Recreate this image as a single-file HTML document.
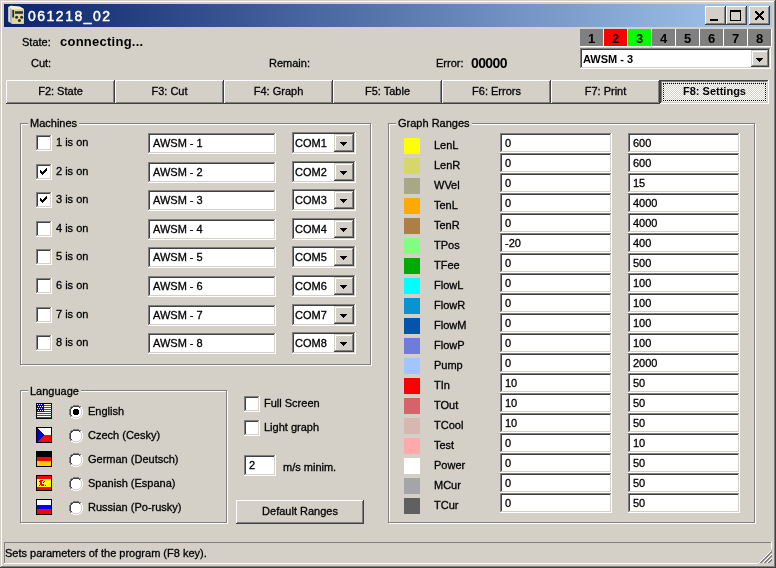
<!DOCTYPE html>
<html><head><meta charset="utf-8"><style>
html,body{margin:0;padding:0}
body{width:776px;height:568px;overflow:hidden;position:relative;background:#d4d0c8;font-family:"Liberation Sans",sans-serif;font-size:11px;color:#000}
div,svg{position:absolute;box-sizing:border-box}
.t{white-space:nowrap;line-height:13px;will-change:transform;-webkit-text-stroke:0.3px currentColor}
body{-webkit-font-smoothing:antialiased}
.rz{background:#d4d0c8;box-shadow:inset -1px -1px #404040,inset 1px 1px #fff,inset -2px -2px #808080,inset 2px 2px #d4d0c8}
.sb{background:#d4d0c8;box-shadow:inset -1px -1px #404040,inset 1px 1px #d4d0c8,inset -2px -2px #808080,inset 2px 2px #fff}
.sk{box-shadow:inset -1px -1px #fff,inset 1px 1px #808080,inset -2px -2px #d4d0c8,inset 2px 2px #404040}
</style></head><body>

<div style="left:0;top:0;width:776px;height:568px;box-shadow:inset -1px -1px #404040,inset 1px 1px #d4d0c8,inset -2px -2px #808080,inset 2px 2px #fff"></div>
<div style="left:4px;top:4px;width:768px;height:23px;background:linear-gradient(to right,#0a246a,#a6caf0)"></div>
<svg style="left:0px;top:0px" width="30" height="30" viewBox="0 0 30 30">
<path d="M8.5 7 L11 5.8 L20 6.8 L23.8 9 L23.8 23.8 L12 23.8 L8.5 21.5 Z" fill="#e6e2b0"/>
<path d="M8.5 7 L12 9 L12 23.8 L8.5 21.5 Z" fill="#b4b4bc"/>
<path d="M8.5 7 L10 7.8 L10 22 L8.5 21.5 Z" fill="#dcdce4"/>
<path d="M8.5 7 L11 5.8 L20 6.8 L23.8 9 L12 9 Z" fill="#f4f0c8"/>
<rect x="12" y="9" width="11.8" height="14.8" fill="#dcd8a4"/>
<rect x="12.3" y="10" width="1.8" height="7.5" fill="#2c2c24"/>
<rect x="15" y="11.2" width="8" height="2.6" fill="#34302a"/>
<circle cx="16.6" cy="17.3" r="1.5" fill="#2c2c24"/>
<circle cx="21.6" cy="17.3" r="1.5" fill="#2c2c24"/>
<circle cx="19.4" cy="20.6" r="1.5" fill="#2c2c24"/>
</svg>
<div class="t" style="left:28px;top:10px;font-size:14px;color:#fff;letter-spacing:1.5px;-webkit-text-stroke:0.45px #fff;">061218_02</div>
<div class="rz" style="left:705px;top:6px;width:21px;height:19px;"></div>
<div class="rz" style="left:726px;top:6px;width:21px;height:19px;"></div>
<div class="rz" style="left:749px;top:6px;width:21px;height:19px;"></div>
<div style="left:710px;top:19px;width:8px;height:2px;background:#000;"></div>
<div style="left:730px;top:10px;width:11px;height:11px;border:1px solid #000;border-top-width:2px"></div>
<svg style="left:755px;top:11px" width="9" height="9" shape-rendering="crispEdges"><rect x="0" y="0" width="1" height="1" fill="#000"/><rect x="1" y="0" width="1" height="1" fill="#000"/><rect x="7" y="0" width="1" height="1" fill="#000"/><rect x="8" y="0" width="1" height="1" fill="#000"/><rect x="0" y="1" width="1" height="1" fill="#000"/><rect x="1" y="1" width="1" height="1" fill="#000"/><rect x="2" y="1" width="1" height="1" fill="#000"/><rect x="6" y="1" width="1" height="1" fill="#000"/><rect x="7" y="1" width="1" height="1" fill="#000"/><rect x="8" y="1" width="1" height="1" fill="#000"/><rect x="1" y="2" width="1" height="1" fill="#000"/><rect x="2" y="2" width="1" height="1" fill="#000"/><rect x="3" y="2" width="1" height="1" fill="#000"/><rect x="5" y="2" width="1" height="1" fill="#000"/><rect x="6" y="2" width="1" height="1" fill="#000"/><rect x="7" y="2" width="1" height="1" fill="#000"/><rect x="2" y="3" width="1" height="1" fill="#000"/><rect x="3" y="3" width="1" height="1" fill="#000"/><rect x="4" y="3" width="1" height="1" fill="#000"/><rect x="5" y="3" width="1" height="1" fill="#000"/><rect x="6" y="3" width="1" height="1" fill="#000"/><rect x="3" y="4" width="1" height="1" fill="#000"/><rect x="4" y="4" width="1" height="1" fill="#000"/><rect x="5" y="4" width="1" height="1" fill="#000"/><rect x="2" y="5" width="1" height="1" fill="#000"/><rect x="3" y="5" width="1" height="1" fill="#000"/><rect x="4" y="5" width="1" height="1" fill="#000"/><rect x="5" y="5" width="1" height="1" fill="#000"/><rect x="6" y="5" width="1" height="1" fill="#000"/><rect x="1" y="6" width="1" height="1" fill="#000"/><rect x="2" y="6" width="1" height="1" fill="#000"/><rect x="3" y="6" width="1" height="1" fill="#000"/><rect x="5" y="6" width="1" height="1" fill="#000"/><rect x="6" y="6" width="1" height="1" fill="#000"/><rect x="7" y="6" width="1" height="1" fill="#000"/><rect x="0" y="7" width="1" height="1" fill="#000"/><rect x="1" y="7" width="1" height="1" fill="#000"/><rect x="2" y="7" width="1" height="1" fill="#000"/><rect x="6" y="7" width="1" height="1" fill="#000"/><rect x="7" y="7" width="1" height="1" fill="#000"/><rect x="8" y="7" width="1" height="1" fill="#000"/><rect x="0" y="8" width="1" height="1" fill="#000"/><rect x="1" y="8" width="1" height="1" fill="#000"/><rect x="7" y="8" width="1" height="1" fill="#000"/><rect x="8" y="8" width="1" height="1" fill="#000"/></svg>
<div class="t" style="right:725px;top:36px;font-size:11px;color:#000;text-align:right;">State:</div>
<div class="t" style="left:60px;top:35px;font-size:13px;font-weight:bold;-webkit-text-stroke:0;color:#000;letter-spacing:0.25px;">connecting...</div>
<div class="t" style="right:725px;top:57px;font-size:11px;color:#000;text-align:right;">Cut:</div>
<div class="t" style="left:269px;top:57px;font-size:11px;color:#000;">Remain:</div>
<div class="t" style="left:436px;top:57px;font-size:11px;color:#000;">Error:</div>
<div class="t" style="left:471px;top:57px;font-size:14px;font-weight:bold;-webkit-text-stroke:0;color:#000;letter-spacing:-0.6px;">00000</div>
<div style="left:580px;top:29px;width:23px;height:17px;background:#808080;"></div>
<div style="left:603px;top:29px;width:1px;height:18px;background:#fff;"></div>
<div style="left:580px;top:46px;width:24px;height:1px;background:#fff;"></div>
<div class="t" style="left:580px;top:32px;width:23px;font-size:13px;font-weight:bold;-webkit-text-stroke:0;color:#000;text-align:center;">1</div>
<div style="left:604px;top:29px;width:23px;height:17px;background:#ff0000;"></div>
<div style="left:627px;top:29px;width:1px;height:18px;background:#fff;"></div>
<div style="left:604px;top:46px;width:24px;height:1px;background:#fff;"></div>
<div class="t" style="left:604px;top:32px;width:23px;font-size:13px;font-weight:bold;-webkit-text-stroke:0;color:#000;text-align:center;">2</div>
<div style="left:628px;top:29px;width:23px;height:17px;background:#00ff00;"></div>
<div style="left:651px;top:29px;width:1px;height:18px;background:#fff;"></div>
<div style="left:628px;top:46px;width:24px;height:1px;background:#fff;"></div>
<div class="t" style="left:628px;top:32px;width:23px;font-size:13px;font-weight:bold;-webkit-text-stroke:0;color:#000;text-align:center;">3</div>
<div style="left:652px;top:29px;width:23px;height:17px;background:#808080;"></div>
<div style="left:675px;top:29px;width:1px;height:18px;background:#fff;"></div>
<div style="left:652px;top:46px;width:24px;height:1px;background:#fff;"></div>
<div class="t" style="left:652px;top:32px;width:23px;font-size:13px;font-weight:bold;-webkit-text-stroke:0;color:#000;text-align:center;">4</div>
<div style="left:676px;top:29px;width:23px;height:17px;background:#808080;"></div>
<div style="left:699px;top:29px;width:1px;height:18px;background:#fff;"></div>
<div style="left:676px;top:46px;width:24px;height:1px;background:#fff;"></div>
<div class="t" style="left:676px;top:32px;width:23px;font-size:13px;font-weight:bold;-webkit-text-stroke:0;color:#000;text-align:center;">5</div>
<div style="left:700px;top:29px;width:23px;height:17px;background:#808080;"></div>
<div style="left:723px;top:29px;width:1px;height:18px;background:#fff;"></div>
<div style="left:700px;top:46px;width:24px;height:1px;background:#fff;"></div>
<div class="t" style="left:700px;top:32px;width:23px;font-size:13px;font-weight:bold;-webkit-text-stroke:0;color:#000;text-align:center;">6</div>
<div style="left:724px;top:29px;width:23px;height:17px;background:#808080;"></div>
<div style="left:747px;top:29px;width:1px;height:18px;background:#fff;"></div>
<div style="left:724px;top:46px;width:24px;height:1px;background:#fff;"></div>
<div class="t" style="left:724px;top:32px;width:23px;font-size:13px;font-weight:bold;-webkit-text-stroke:0;color:#000;text-align:center;">7</div>
<div style="left:748px;top:29px;width:23px;height:17px;background:#808080;"></div>
<div style="left:771px;top:29px;width:1px;height:18px;background:#fff;"></div>
<div style="left:748px;top:46px;width:24px;height:1px;background:#fff;"></div>
<div class="t" style="left:748px;top:32px;width:23px;font-size:13px;font-weight:bold;-webkit-text-stroke:0;color:#000;text-align:center;">8</div>
<div class="sk" style="left:580px;top:48px;width:191px;height:21px;background:#fff;"></div>
<div class="sb" style="left:751px;top:50px;width:18px;height:17px;"></div>
<div style="left:756px;top:58px;width:7px;height:1px;background:#000;"></div>
<div style="left:757px;top:59px;width:5px;height:1px;background:#000;"></div>
<div style="left:758px;top:60px;width:3px;height:1px;background:#000;"></div>
<div style="left:759px;top:61px;width:1px;height:1px;background:#000;"></div>
<div class="t" style="left:583px;top:53px;font-size:11px;font-weight:bold;-webkit-text-stroke:0;color:#000;">AWSM - 3</div>
<div class="rz" style="left:6px;top:80px;width:109px;height:24px;"></div>
<div class="t" style="left:6px;top:85px;width:109px;font-size:11px;color:#000;text-align:center;">F2: State</div>
<div class="rz" style="left:115px;top:80px;width:109px;height:24px;"></div>
<div class="t" style="left:115px;top:85px;width:109px;font-size:11px;color:#000;text-align:center;">F3: Cut</div>
<div class="rz" style="left:224px;top:80px;width:109px;height:24px;"></div>
<div class="t" style="left:224px;top:85px;width:109px;font-size:11px;color:#000;text-align:center;">F4: Graph</div>
<div class="rz" style="left:333px;top:80px;width:109px;height:24px;"></div>
<div class="t" style="left:333px;top:85px;width:109px;font-size:11px;color:#000;text-align:center;">F5: Table</div>
<div class="rz" style="left:442px;top:80px;width:109px;height:24px;"></div>
<div class="t" style="left:442px;top:85px;width:109px;font-size:11px;color:#000;text-align:center;">F6: Errors</div>
<div class="rz" style="left:551px;top:80px;width:109px;height:24px;"></div>
<div class="t" style="left:551px;top:85px;width:109px;font-size:11px;color:#000;text-align:center;">F7: Print</div>
<div style="left:660px;top:80px;width:109px;height:24px;background-color:#fff;background-image:repeating-conic-gradient(#d4d0c8 0 25%,#fff 0 50%);background-size:2px 2px;box-shadow:inset -1px -1px #fff,inset 1px 1px #404040,inset -2px -2px #d4d0c8,inset 2px 2px #808080"></div>
<div style="left:663px;top:83px;width:103px;height:18px;border:1px dotted #000"></div>
<div class="t" style="left:660px;top:85px;width:109px;font-size:11px;font-weight:bold;-webkit-text-stroke:0;color:#000;text-align:center;">F8: Settings</div>
<div style="left:21px;top:124px;width:351px;height:242px;border:1px solid #fff"></div>
<div style="left:20px;top:123px;width:351px;height:242px;border:1px solid #808080"></div>
<div class="t" style="left:28px;top:117px;padding:0 2px;background:#d4d0c8">Machines</div>
<div class="sk" style="left:36px;top:135px;width:16px;height:16px;background:#fff;"></div>
<div class="t" style="left:56px;top:136px;font-size:11px;color:#000;">1 is on</div>
<div class="sk" style="left:148px;top:133px;width:128px;height:21px;background:#fff;"></div>
<div class="t" style="left:153px;top:137px;font-size:11px;color:#000;">AWSM - 1</div>
<div class="sk" style="left:292px;top:132px;width:64px;height:22px;background:#fff;"></div>
<div class="sb" style="left:334px;top:134px;width:20px;height:18px;"></div>
<div style="left:340px;top:142px;width:7px;height:1px;background:#000;"></div>
<div style="left:341px;top:143px;width:5px;height:1px;background:#000;"></div>
<div style="left:342px;top:144px;width:3px;height:1px;background:#000;"></div>
<div style="left:343px;top:145px;width:1px;height:1px;background:#000;"></div>
<div class="t" style="left:295px;top:137px;font-size:11px;color:#000;">COM1</div>
<div class="sk" style="left:36px;top:164px;width:16px;height:16px;background:#fff;"></div>
<div style="left:46px;top:168px;width:1px;height:1px;background:#000;"></div>
<div style="left:45px;top:169px;width:2px;height:1px;background:#000;"></div>
<div style="left:40px;top:170px;width:1px;height:1px;background:#000;"></div>
<div style="left:44px;top:170px;width:3px;height:1px;background:#000;"></div>
<div style="left:40px;top:171px;width:2px;height:1px;background:#000;"></div>
<div style="left:43px;top:171px;width:3px;height:1px;background:#000;"></div>
<div style="left:40px;top:172px;width:5px;height:1px;background:#000;"></div>
<div style="left:41px;top:173px;width:3px;height:1px;background:#000;"></div>
<div style="left:42px;top:174px;width:1px;height:1px;background:#000;"></div>
<div class="t" style="left:56px;top:165px;font-size:11px;color:#000;">2 is on</div>
<div class="sk" style="left:148px;top:162px;width:128px;height:21px;background:#fff;"></div>
<div class="t" style="left:153px;top:166px;font-size:11px;color:#000;">AWSM - 2</div>
<div class="sk" style="left:292px;top:161px;width:64px;height:22px;background:#fff;"></div>
<div class="sb" style="left:334px;top:163px;width:20px;height:18px;"></div>
<div style="left:340px;top:171px;width:7px;height:1px;background:#000;"></div>
<div style="left:341px;top:172px;width:5px;height:1px;background:#000;"></div>
<div style="left:342px;top:173px;width:3px;height:1px;background:#000;"></div>
<div style="left:343px;top:174px;width:1px;height:1px;background:#000;"></div>
<div class="t" style="left:295px;top:166px;font-size:11px;color:#000;">COM2</div>
<div class="sk" style="left:36px;top:192px;width:16px;height:16px;background:#fff;"></div>
<div style="left:46px;top:196px;width:1px;height:1px;background:#000;"></div>
<div style="left:45px;top:197px;width:2px;height:1px;background:#000;"></div>
<div style="left:40px;top:198px;width:1px;height:1px;background:#000;"></div>
<div style="left:44px;top:198px;width:3px;height:1px;background:#000;"></div>
<div style="left:40px;top:199px;width:2px;height:1px;background:#000;"></div>
<div style="left:43px;top:199px;width:3px;height:1px;background:#000;"></div>
<div style="left:40px;top:200px;width:5px;height:1px;background:#000;"></div>
<div style="left:41px;top:201px;width:3px;height:1px;background:#000;"></div>
<div style="left:42px;top:202px;width:1px;height:1px;background:#000;"></div>
<div class="t" style="left:56px;top:193px;font-size:11px;color:#000;">3 is on</div>
<div class="sk" style="left:148px;top:190px;width:128px;height:21px;background:#fff;"></div>
<div class="t" style="left:153px;top:194px;font-size:11px;color:#000;">AWSM - 3</div>
<div class="sk" style="left:292px;top:189px;width:64px;height:22px;background:#fff;"></div>
<div class="sb" style="left:334px;top:191px;width:20px;height:18px;"></div>
<div style="left:340px;top:199px;width:7px;height:1px;background:#000;"></div>
<div style="left:341px;top:200px;width:5px;height:1px;background:#000;"></div>
<div style="left:342px;top:201px;width:3px;height:1px;background:#000;"></div>
<div style="left:343px;top:202px;width:1px;height:1px;background:#000;"></div>
<div class="t" style="left:295px;top:194px;font-size:11px;color:#000;">COM3</div>
<div class="sk" style="left:36px;top:221px;width:16px;height:16px;background:#fff;"></div>
<div class="t" style="left:56px;top:222px;font-size:11px;color:#000;">4 is on</div>
<div class="sk" style="left:148px;top:219px;width:128px;height:21px;background:#fff;"></div>
<div class="t" style="left:153px;top:223px;font-size:11px;color:#000;">AWSM - 4</div>
<div class="sk" style="left:292px;top:218px;width:64px;height:22px;background:#fff;"></div>
<div class="sb" style="left:334px;top:220px;width:20px;height:18px;"></div>
<div style="left:340px;top:228px;width:7px;height:1px;background:#000;"></div>
<div style="left:341px;top:229px;width:5px;height:1px;background:#000;"></div>
<div style="left:342px;top:230px;width:3px;height:1px;background:#000;"></div>
<div style="left:343px;top:231px;width:1px;height:1px;background:#000;"></div>
<div class="t" style="left:295px;top:223px;font-size:11px;color:#000;">COM4</div>
<div class="sk" style="left:36px;top:249px;width:16px;height:16px;background:#fff;"></div>
<div class="t" style="left:56px;top:250px;font-size:11px;color:#000;">5 is on</div>
<div class="sk" style="left:148px;top:247px;width:128px;height:21px;background:#fff;"></div>
<div class="t" style="left:153px;top:251px;font-size:11px;color:#000;">AWSM - 5</div>
<div class="sk" style="left:292px;top:246px;width:64px;height:22px;background:#fff;"></div>
<div class="sb" style="left:334px;top:248px;width:20px;height:18px;"></div>
<div style="left:340px;top:256px;width:7px;height:1px;background:#000;"></div>
<div style="left:341px;top:257px;width:5px;height:1px;background:#000;"></div>
<div style="left:342px;top:258px;width:3px;height:1px;background:#000;"></div>
<div style="left:343px;top:259px;width:1px;height:1px;background:#000;"></div>
<div class="t" style="left:295px;top:251px;font-size:11px;color:#000;">COM5</div>
<div class="sk" style="left:36px;top:278px;width:16px;height:16px;background:#fff;"></div>
<div class="t" style="left:56px;top:279px;font-size:11px;color:#000;">6 is on</div>
<div class="sk" style="left:148px;top:276px;width:128px;height:21px;background:#fff;"></div>
<div class="t" style="left:153px;top:280px;font-size:11px;color:#000;">AWSM - 6</div>
<div class="sk" style="left:292px;top:275px;width:64px;height:22px;background:#fff;"></div>
<div class="sb" style="left:334px;top:277px;width:20px;height:18px;"></div>
<div style="left:340px;top:285px;width:7px;height:1px;background:#000;"></div>
<div style="left:341px;top:286px;width:5px;height:1px;background:#000;"></div>
<div style="left:342px;top:287px;width:3px;height:1px;background:#000;"></div>
<div style="left:343px;top:288px;width:1px;height:1px;background:#000;"></div>
<div class="t" style="left:295px;top:280px;font-size:11px;color:#000;">COM6</div>
<div class="sk" style="left:36px;top:307px;width:16px;height:16px;background:#fff;"></div>
<div class="t" style="left:56px;top:308px;font-size:11px;color:#000;">7 is on</div>
<div class="sk" style="left:148px;top:305px;width:128px;height:21px;background:#fff;"></div>
<div class="t" style="left:153px;top:309px;font-size:11px;color:#000;">AWSM - 7</div>
<div class="sk" style="left:292px;top:304px;width:64px;height:22px;background:#fff;"></div>
<div class="sb" style="left:334px;top:306px;width:20px;height:18px;"></div>
<div style="left:340px;top:314px;width:7px;height:1px;background:#000;"></div>
<div style="left:341px;top:315px;width:5px;height:1px;background:#000;"></div>
<div style="left:342px;top:316px;width:3px;height:1px;background:#000;"></div>
<div style="left:343px;top:317px;width:1px;height:1px;background:#000;"></div>
<div class="t" style="left:295px;top:309px;font-size:11px;color:#000;">COM7</div>
<div class="sk" style="left:36px;top:335px;width:16px;height:16px;background:#fff;"></div>
<div class="t" style="left:56px;top:336px;font-size:11px;color:#000;">8 is on</div>
<div class="sk" style="left:148px;top:333px;width:128px;height:21px;background:#fff;"></div>
<div class="t" style="left:153px;top:337px;font-size:11px;color:#000;">AWSM - 8</div>
<div class="sk" style="left:292px;top:332px;width:64px;height:22px;background:#fff;"></div>
<div class="sb" style="left:334px;top:334px;width:20px;height:18px;"></div>
<div style="left:340px;top:342px;width:7px;height:1px;background:#000;"></div>
<div style="left:341px;top:343px;width:5px;height:1px;background:#000;"></div>
<div style="left:342px;top:344px;width:3px;height:1px;background:#000;"></div>
<div style="left:343px;top:345px;width:1px;height:1px;background:#000;"></div>
<div class="t" style="left:295px;top:337px;font-size:11px;color:#000;">COM8</div>
<div style="left:21px;top:391px;width:207px;height:133px;border:1px solid #fff"></div>
<div style="left:20px;top:390px;width:207px;height:133px;border:1px solid #808080"></div>
<div class="t" style="left:28px;top:385px;padding:0 2px;background:#d4d0c8">Language</div>
<svg style="left:36px;top:403px" width="16" height="16" viewBox="0 0 16 16" shape-rendering="crispEdges"><rect x="0" y="0" width="16" height="16" fill="#000"/><rect x="1" y="1" width="14" height="14" fill="#fff"/><rect x="1" y="2" width="14" height="1" fill="#ff0000"/><rect x="1" y="4" width="14" height="1" fill="#ff0000"/><rect x="1" y="6" width="14" height="1" fill="#ff0000"/><rect x="1" y="8" width="14" height="1" fill="#ff0000"/><rect x="1" y="10" width="14" height="1" fill="#ff0000"/><rect x="1" y="12" width="14" height="1" fill="#ff0000"/><rect x="1" y="14" width="14" height="1" fill="#ff0000"/><rect x="1" y="1" width="7" height="8" fill="#0000cc"/><rect x="1" y="1" width="1" height="1" fill="#fff"/><rect x="2" y="3" width="1" height="1" fill="#fff"/><rect x="1" y="5" width="1" height="1" fill="#fff"/><rect x="2" y="7" width="1" height="1" fill="#fff"/><rect x="3" y="1" width="1" height="1" fill="#fff"/><rect x="4" y="3" width="1" height="1" fill="#fff"/><rect x="3" y="5" width="1" height="1" fill="#fff"/><rect x="4" y="7" width="1" height="1" fill="#fff"/><rect x="5" y="1" width="1" height="1" fill="#fff"/><rect x="6" y="3" width="1" height="1" fill="#fff"/><rect x="5" y="5" width="1" height="1" fill="#fff"/><rect x="6" y="7" width="1" height="1" fill="#fff"/></svg>
<svg style="left:69px;top:405px" width="14" height="14" shape-rendering="crispEdges"><rect x="4" y="0" width="1" height="1" fill="#808080"/><rect x="5" y="0" width="1" height="1" fill="#808080"/><rect x="6" y="0" width="1" height="1" fill="#808080"/><rect x="7" y="0" width="1" height="1" fill="#808080"/><rect x="8" y="0" width="1" height="1" fill="#808080"/><rect x="9" y="0" width="1" height="1" fill="#808080"/><rect x="2" y="1" width="1" height="1" fill="#808080"/><rect x="3" y="1" width="1" height="1" fill="#808080"/><rect x="4" y="1" width="1" height="1" fill="#404040"/><rect x="5" y="1" width="1" height="1" fill="#404040"/><rect x="6" y="1" width="1" height="1" fill="#404040"/><rect x="7" y="1" width="1" height="1" fill="#404040"/><rect x="8" y="1" width="1" height="1" fill="#404040"/><rect x="9" y="1" width="1" height="1" fill="#404040"/><rect x="10" y="1" width="1" height="1" fill="#808080"/><rect x="11" y="1" width="1" height="1" fill="#808080"/><rect x="1" y="2" width="1" height="1" fill="#808080"/><rect x="2" y="2" width="1" height="1" fill="#404040"/><rect x="3" y="2" width="1" height="1" fill="#404040"/><rect x="4" y="2" width="1" height="1" fill="#fff"/><rect x="5" y="2" width="1" height="1" fill="#fff"/><rect x="6" y="2" width="1" height="1" fill="#fff"/><rect x="7" y="2" width="1" height="1" fill="#fff"/><rect x="8" y="2" width="1" height="1" fill="#fff"/><rect x="9" y="2" width="1" height="1" fill="#fff"/><rect x="10" y="2" width="1" height="1" fill="#404040"/><rect x="11" y="2" width="1" height="1" fill="#d4d0c8"/><rect x="12" y="2" width="1" height="1" fill="#ffffff"/><rect x="1" y="3" width="1" height="1" fill="#808080"/><rect x="2" y="3" width="1" height="1" fill="#404040"/><rect x="3" y="3" width="1" height="1" fill="#fff"/><rect x="4" y="3" width="1" height="1" fill="#fff"/><rect x="5" y="3" width="1" height="1" fill="#fff"/><rect x="6" y="3" width="1" height="1" fill="#fff"/><rect x="7" y="3" width="1" height="1" fill="#fff"/><rect x="8" y="3" width="1" height="1" fill="#fff"/><rect x="9" y="3" width="1" height="1" fill="#fff"/><rect x="10" y="3" width="1" height="1" fill="#fff"/><rect x="11" y="3" width="1" height="1" fill="#d4d0c8"/><rect x="12" y="3" width="1" height="1" fill="#ffffff"/><rect x="0" y="4" width="1" height="1" fill="#808080"/><rect x="1" y="4" width="1" height="1" fill="#404040"/><rect x="2" y="4" width="1" height="1" fill="#fff"/><rect x="3" y="4" width="1" height="1" fill="#fff"/><rect x="4" y="4" width="1" height="1" fill="#fff"/><rect x="5" y="4" width="1" height="1" fill="#000"/><rect x="6" y="4" width="1" height="1" fill="#000"/><rect x="7" y="4" width="1" height="1" fill="#000"/><rect x="8" y="4" width="1" height="1" fill="#000"/><rect x="9" y="4" width="1" height="1" fill="#fff"/><rect x="10" y="4" width="1" height="1" fill="#fff"/><rect x="11" y="4" width="1" height="1" fill="#fff"/><rect x="12" y="4" width="1" height="1" fill="#d4d0c8"/><rect x="13" y="4" width="1" height="1" fill="#ffffff"/><rect x="0" y="5" width="1" height="1" fill="#808080"/><rect x="1" y="5" width="1" height="1" fill="#404040"/><rect x="2" y="5" width="1" height="1" fill="#fff"/><rect x="3" y="5" width="1" height="1" fill="#fff"/><rect x="4" y="5" width="1" height="1" fill="#000"/><rect x="5" y="5" width="1" height="1" fill="#000"/><rect x="6" y="5" width="1" height="1" fill="#000"/><rect x="7" y="5" width="1" height="1" fill="#000"/><rect x="8" y="5" width="1" height="1" fill="#000"/><rect x="9" y="5" width="1" height="1" fill="#000"/><rect x="10" y="5" width="1" height="1" fill="#fff"/><rect x="11" y="5" width="1" height="1" fill="#fff"/><rect x="12" y="5" width="1" height="1" fill="#d4d0c8"/><rect x="13" y="5" width="1" height="1" fill="#ffffff"/><rect x="0" y="6" width="1" height="1" fill="#808080"/><rect x="1" y="6" width="1" height="1" fill="#404040"/><rect x="2" y="6" width="1" height="1" fill="#fff"/><rect x="3" y="6" width="1" height="1" fill="#fff"/><rect x="4" y="6" width="1" height="1" fill="#000"/><rect x="5" y="6" width="1" height="1" fill="#000"/><rect x="6" y="6" width="1" height="1" fill="#000"/><rect x="7" y="6" width="1" height="1" fill="#000"/><rect x="8" y="6" width="1" height="1" fill="#000"/><rect x="9" y="6" width="1" height="1" fill="#000"/><rect x="10" y="6" width="1" height="1" fill="#fff"/><rect x="11" y="6" width="1" height="1" fill="#fff"/><rect x="12" y="6" width="1" height="1" fill="#d4d0c8"/><rect x="13" y="6" width="1" height="1" fill="#ffffff"/><rect x="0" y="7" width="1" height="1" fill="#808080"/><rect x="1" y="7" width="1" height="1" fill="#404040"/><rect x="2" y="7" width="1" height="1" fill="#fff"/><rect x="3" y="7" width="1" height="1" fill="#fff"/><rect x="4" y="7" width="1" height="1" fill="#000"/><rect x="5" y="7" width="1" height="1" fill="#000"/><rect x="6" y="7" width="1" height="1" fill="#000"/><rect x="7" y="7" width="1" height="1" fill="#000"/><rect x="8" y="7" width="1" height="1" fill="#000"/><rect x="9" y="7" width="1" height="1" fill="#000"/><rect x="10" y="7" width="1" height="1" fill="#fff"/><rect x="11" y="7" width="1" height="1" fill="#fff"/><rect x="12" y="7" width="1" height="1" fill="#d4d0c8"/><rect x="13" y="7" width="1" height="1" fill="#ffffff"/><rect x="0" y="8" width="1" height="1" fill="#808080"/><rect x="1" y="8" width="1" height="1" fill="#404040"/><rect x="2" y="8" width="1" height="1" fill="#fff"/><rect x="3" y="8" width="1" height="1" fill="#fff"/><rect x="4" y="8" width="1" height="1" fill="#000"/><rect x="5" y="8" width="1" height="1" fill="#000"/><rect x="6" y="8" width="1" height="1" fill="#000"/><rect x="7" y="8" width="1" height="1" fill="#000"/><rect x="8" y="8" width="1" height="1" fill="#000"/><rect x="9" y="8" width="1" height="1" fill="#000"/><rect x="10" y="8" width="1" height="1" fill="#fff"/><rect x="11" y="8" width="1" height="1" fill="#fff"/><rect x="12" y="8" width="1" height="1" fill="#d4d0c8"/><rect x="13" y="8" width="1" height="1" fill="#ffffff"/><rect x="0" y="9" width="1" height="1" fill="#808080"/><rect x="1" y="9" width="1" height="1" fill="#404040"/><rect x="2" y="9" width="1" height="1" fill="#fff"/><rect x="3" y="9" width="1" height="1" fill="#fff"/><rect x="4" y="9" width="1" height="1" fill="#fff"/><rect x="5" y="9" width="1" height="1" fill="#000"/><rect x="6" y="9" width="1" height="1" fill="#000"/><rect x="7" y="9" width="1" height="1" fill="#000"/><rect x="8" y="9" width="1" height="1" fill="#000"/><rect x="9" y="9" width="1" height="1" fill="#fff"/><rect x="10" y="9" width="1" height="1" fill="#fff"/><rect x="11" y="9" width="1" height="1" fill="#fff"/><rect x="12" y="9" width="1" height="1" fill="#d4d0c8"/><rect x="13" y="9" width="1" height="1" fill="#ffffff"/><rect x="1" y="10" width="1" height="1" fill="#808080"/><rect x="2" y="10" width="1" height="1" fill="#404040"/><rect x="3" y="10" width="1" height="1" fill="#fff"/><rect x="4" y="10" width="1" height="1" fill="#fff"/><rect x="5" y="10" width="1" height="1" fill="#fff"/><rect x="6" y="10" width="1" height="1" fill="#fff"/><rect x="7" y="10" width="1" height="1" fill="#fff"/><rect x="8" y="10" width="1" height="1" fill="#fff"/><rect x="9" y="10" width="1" height="1" fill="#fff"/><rect x="10" y="10" width="1" height="1" fill="#fff"/><rect x="11" y="10" width="1" height="1" fill="#d4d0c8"/><rect x="12" y="10" width="1" height="1" fill="#ffffff"/><rect x="1" y="11" width="1" height="1" fill="#808080"/><rect x="2" y="11" width="1" height="1" fill="#d4d0c8"/><rect x="3" y="11" width="1" height="1" fill="#d4d0c8"/><rect x="4" y="11" width="1" height="1" fill="#fff"/><rect x="5" y="11" width="1" height="1" fill="#fff"/><rect x="6" y="11" width="1" height="1" fill="#fff"/><rect x="7" y="11" width="1" height="1" fill="#fff"/><rect x="8" y="11" width="1" height="1" fill="#fff"/><rect x="9" y="11" width="1" height="1" fill="#fff"/><rect x="10" y="11" width="1" height="1" fill="#d4d0c8"/><rect x="11" y="11" width="1" height="1" fill="#d4d0c8"/><rect x="12" y="11" width="1" height="1" fill="#ffffff"/><rect x="2" y="12" width="1" height="1" fill="#ffffff"/><rect x="3" y="12" width="1" height="1" fill="#ffffff"/><rect x="4" y="12" width="1" height="1" fill="#d4d0c8"/><rect x="5" y="12" width="1" height="1" fill="#d4d0c8"/><rect x="6" y="12" width="1" height="1" fill="#d4d0c8"/><rect x="7" y="12" width="1" height="1" fill="#d4d0c8"/><rect x="8" y="12" width="1" height="1" fill="#d4d0c8"/><rect x="9" y="12" width="1" height="1" fill="#d4d0c8"/><rect x="10" y="12" width="1" height="1" fill="#ffffff"/><rect x="11" y="12" width="1" height="1" fill="#ffffff"/><rect x="4" y="13" width="1" height="1" fill="#ffffff"/><rect x="5" y="13" width="1" height="1" fill="#ffffff"/><rect x="6" y="13" width="1" height="1" fill="#ffffff"/><rect x="7" y="13" width="1" height="1" fill="#ffffff"/><rect x="8" y="13" width="1" height="1" fill="#ffffff"/><rect x="9" y="13" width="1" height="1" fill="#ffffff"/></svg>
<div class="t" style="left:88px;top:405px;font-size:11px;color:#000;">English</div>
<svg style="left:36px;top:427px" width="16" height="16" viewBox="0 0 16 16" shape-rendering="crispEdges"><rect x="0" y="0" width="16" height="16" fill="#000"/><rect x="1" y="1" width="14" height="7" fill="#fff"/><rect x="1" y="8" width="14" height="7" fill="#ff0000"/><path d="M1 1 L8 8 L1 15 Z" fill="#0000cc"/></svg>
<svg style="left:69px;top:429px" width="14" height="14" shape-rendering="crispEdges"><rect x="4" y="0" width="1" height="1" fill="#808080"/><rect x="5" y="0" width="1" height="1" fill="#808080"/><rect x="6" y="0" width="1" height="1" fill="#808080"/><rect x="7" y="0" width="1" height="1" fill="#808080"/><rect x="8" y="0" width="1" height="1" fill="#808080"/><rect x="9" y="0" width="1" height="1" fill="#808080"/><rect x="2" y="1" width="1" height="1" fill="#808080"/><rect x="3" y="1" width="1" height="1" fill="#808080"/><rect x="4" y="1" width="1" height="1" fill="#404040"/><rect x="5" y="1" width="1" height="1" fill="#404040"/><rect x="6" y="1" width="1" height="1" fill="#404040"/><rect x="7" y="1" width="1" height="1" fill="#404040"/><rect x="8" y="1" width="1" height="1" fill="#404040"/><rect x="9" y="1" width="1" height="1" fill="#404040"/><rect x="10" y="1" width="1" height="1" fill="#808080"/><rect x="11" y="1" width="1" height="1" fill="#808080"/><rect x="1" y="2" width="1" height="1" fill="#808080"/><rect x="2" y="2" width="1" height="1" fill="#404040"/><rect x="3" y="2" width="1" height="1" fill="#404040"/><rect x="4" y="2" width="1" height="1" fill="#fff"/><rect x="5" y="2" width="1" height="1" fill="#fff"/><rect x="6" y="2" width="1" height="1" fill="#fff"/><rect x="7" y="2" width="1" height="1" fill="#fff"/><rect x="8" y="2" width="1" height="1" fill="#fff"/><rect x="9" y="2" width="1" height="1" fill="#fff"/><rect x="10" y="2" width="1" height="1" fill="#404040"/><rect x="11" y="2" width="1" height="1" fill="#d4d0c8"/><rect x="12" y="2" width="1" height="1" fill="#ffffff"/><rect x="1" y="3" width="1" height="1" fill="#808080"/><rect x="2" y="3" width="1" height="1" fill="#404040"/><rect x="3" y="3" width="1" height="1" fill="#fff"/><rect x="4" y="3" width="1" height="1" fill="#fff"/><rect x="5" y="3" width="1" height="1" fill="#fff"/><rect x="6" y="3" width="1" height="1" fill="#fff"/><rect x="7" y="3" width="1" height="1" fill="#fff"/><rect x="8" y="3" width="1" height="1" fill="#fff"/><rect x="9" y="3" width="1" height="1" fill="#fff"/><rect x="10" y="3" width="1" height="1" fill="#fff"/><rect x="11" y="3" width="1" height="1" fill="#d4d0c8"/><rect x="12" y="3" width="1" height="1" fill="#ffffff"/><rect x="0" y="4" width="1" height="1" fill="#808080"/><rect x="1" y="4" width="1" height="1" fill="#404040"/><rect x="2" y="4" width="1" height="1" fill="#fff"/><rect x="3" y="4" width="1" height="1" fill="#fff"/><rect x="4" y="4" width="1" height="1" fill="#fff"/><rect x="5" y="4" width="1" height="1" fill="#fff"/><rect x="6" y="4" width="1" height="1" fill="#fff"/><rect x="7" y="4" width="1" height="1" fill="#fff"/><rect x="8" y="4" width="1" height="1" fill="#fff"/><rect x="9" y="4" width="1" height="1" fill="#fff"/><rect x="10" y="4" width="1" height="1" fill="#fff"/><rect x="11" y="4" width="1" height="1" fill="#fff"/><rect x="12" y="4" width="1" height="1" fill="#d4d0c8"/><rect x="13" y="4" width="1" height="1" fill="#ffffff"/><rect x="0" y="5" width="1" height="1" fill="#808080"/><rect x="1" y="5" width="1" height="1" fill="#404040"/><rect x="2" y="5" width="1" height="1" fill="#fff"/><rect x="3" y="5" width="1" height="1" fill="#fff"/><rect x="4" y="5" width="1" height="1" fill="#fff"/><rect x="5" y="5" width="1" height="1" fill="#fff"/><rect x="6" y="5" width="1" height="1" fill="#fff"/><rect x="7" y="5" width="1" height="1" fill="#fff"/><rect x="8" y="5" width="1" height="1" fill="#fff"/><rect x="9" y="5" width="1" height="1" fill="#fff"/><rect x="10" y="5" width="1" height="1" fill="#fff"/><rect x="11" y="5" width="1" height="1" fill="#fff"/><rect x="12" y="5" width="1" height="1" fill="#d4d0c8"/><rect x="13" y="5" width="1" height="1" fill="#ffffff"/><rect x="0" y="6" width="1" height="1" fill="#808080"/><rect x="1" y="6" width="1" height="1" fill="#404040"/><rect x="2" y="6" width="1" height="1" fill="#fff"/><rect x="3" y="6" width="1" height="1" fill="#fff"/><rect x="4" y="6" width="1" height="1" fill="#fff"/><rect x="5" y="6" width="1" height="1" fill="#fff"/><rect x="6" y="6" width="1" height="1" fill="#fff"/><rect x="7" y="6" width="1" height="1" fill="#fff"/><rect x="8" y="6" width="1" height="1" fill="#fff"/><rect x="9" y="6" width="1" height="1" fill="#fff"/><rect x="10" y="6" width="1" height="1" fill="#fff"/><rect x="11" y="6" width="1" height="1" fill="#fff"/><rect x="12" y="6" width="1" height="1" fill="#d4d0c8"/><rect x="13" y="6" width="1" height="1" fill="#ffffff"/><rect x="0" y="7" width="1" height="1" fill="#808080"/><rect x="1" y="7" width="1" height="1" fill="#404040"/><rect x="2" y="7" width="1" height="1" fill="#fff"/><rect x="3" y="7" width="1" height="1" fill="#fff"/><rect x="4" y="7" width="1" height="1" fill="#fff"/><rect x="5" y="7" width="1" height="1" fill="#fff"/><rect x="6" y="7" width="1" height="1" fill="#fff"/><rect x="7" y="7" width="1" height="1" fill="#fff"/><rect x="8" y="7" width="1" height="1" fill="#fff"/><rect x="9" y="7" width="1" height="1" fill="#fff"/><rect x="10" y="7" width="1" height="1" fill="#fff"/><rect x="11" y="7" width="1" height="1" fill="#fff"/><rect x="12" y="7" width="1" height="1" fill="#d4d0c8"/><rect x="13" y="7" width="1" height="1" fill="#ffffff"/><rect x="0" y="8" width="1" height="1" fill="#808080"/><rect x="1" y="8" width="1" height="1" fill="#404040"/><rect x="2" y="8" width="1" height="1" fill="#fff"/><rect x="3" y="8" width="1" height="1" fill="#fff"/><rect x="4" y="8" width="1" height="1" fill="#fff"/><rect x="5" y="8" width="1" height="1" fill="#fff"/><rect x="6" y="8" width="1" height="1" fill="#fff"/><rect x="7" y="8" width="1" height="1" fill="#fff"/><rect x="8" y="8" width="1" height="1" fill="#fff"/><rect x="9" y="8" width="1" height="1" fill="#fff"/><rect x="10" y="8" width="1" height="1" fill="#fff"/><rect x="11" y="8" width="1" height="1" fill="#fff"/><rect x="12" y="8" width="1" height="1" fill="#d4d0c8"/><rect x="13" y="8" width="1" height="1" fill="#ffffff"/><rect x="0" y="9" width="1" height="1" fill="#808080"/><rect x="1" y="9" width="1" height="1" fill="#404040"/><rect x="2" y="9" width="1" height="1" fill="#fff"/><rect x="3" y="9" width="1" height="1" fill="#fff"/><rect x="4" y="9" width="1" height="1" fill="#fff"/><rect x="5" y="9" width="1" height="1" fill="#fff"/><rect x="6" y="9" width="1" height="1" fill="#fff"/><rect x="7" y="9" width="1" height="1" fill="#fff"/><rect x="8" y="9" width="1" height="1" fill="#fff"/><rect x="9" y="9" width="1" height="1" fill="#fff"/><rect x="10" y="9" width="1" height="1" fill="#fff"/><rect x="11" y="9" width="1" height="1" fill="#fff"/><rect x="12" y="9" width="1" height="1" fill="#d4d0c8"/><rect x="13" y="9" width="1" height="1" fill="#ffffff"/><rect x="1" y="10" width="1" height="1" fill="#808080"/><rect x="2" y="10" width="1" height="1" fill="#404040"/><rect x="3" y="10" width="1" height="1" fill="#fff"/><rect x="4" y="10" width="1" height="1" fill="#fff"/><rect x="5" y="10" width="1" height="1" fill="#fff"/><rect x="6" y="10" width="1" height="1" fill="#fff"/><rect x="7" y="10" width="1" height="1" fill="#fff"/><rect x="8" y="10" width="1" height="1" fill="#fff"/><rect x="9" y="10" width="1" height="1" fill="#fff"/><rect x="10" y="10" width="1" height="1" fill="#fff"/><rect x="11" y="10" width="1" height="1" fill="#d4d0c8"/><rect x="12" y="10" width="1" height="1" fill="#ffffff"/><rect x="1" y="11" width="1" height="1" fill="#808080"/><rect x="2" y="11" width="1" height="1" fill="#d4d0c8"/><rect x="3" y="11" width="1" height="1" fill="#d4d0c8"/><rect x="4" y="11" width="1" height="1" fill="#fff"/><rect x="5" y="11" width="1" height="1" fill="#fff"/><rect x="6" y="11" width="1" height="1" fill="#fff"/><rect x="7" y="11" width="1" height="1" fill="#fff"/><rect x="8" y="11" width="1" height="1" fill="#fff"/><rect x="9" y="11" width="1" height="1" fill="#fff"/><rect x="10" y="11" width="1" height="1" fill="#d4d0c8"/><rect x="11" y="11" width="1" height="1" fill="#d4d0c8"/><rect x="12" y="11" width="1" height="1" fill="#ffffff"/><rect x="2" y="12" width="1" height="1" fill="#ffffff"/><rect x="3" y="12" width="1" height="1" fill="#ffffff"/><rect x="4" y="12" width="1" height="1" fill="#d4d0c8"/><rect x="5" y="12" width="1" height="1" fill="#d4d0c8"/><rect x="6" y="12" width="1" height="1" fill="#d4d0c8"/><rect x="7" y="12" width="1" height="1" fill="#d4d0c8"/><rect x="8" y="12" width="1" height="1" fill="#d4d0c8"/><rect x="9" y="12" width="1" height="1" fill="#d4d0c8"/><rect x="10" y="12" width="1" height="1" fill="#ffffff"/><rect x="11" y="12" width="1" height="1" fill="#ffffff"/><rect x="4" y="13" width="1" height="1" fill="#ffffff"/><rect x="5" y="13" width="1" height="1" fill="#ffffff"/><rect x="6" y="13" width="1" height="1" fill="#ffffff"/><rect x="7" y="13" width="1" height="1" fill="#ffffff"/><rect x="8" y="13" width="1" height="1" fill="#ffffff"/><rect x="9" y="13" width="1" height="1" fill="#ffffff"/></svg>
<div class="t" style="left:88px;top:429px;font-size:11px;color:#000;">Czech (Cesky)</div>
<svg style="left:36px;top:451px" width="16" height="16" viewBox="0 0 16 16" shape-rendering="crispEdges"><rect x="0" y="0" width="16" height="16" fill="#000"/><rect x="1" y="5.7" width="14" height="4.7" fill="#ff0000"/><rect x="1" y="10.3" width="14" height="4.7" fill="#ffcc00"/></svg>
<svg style="left:69px;top:453px" width="14" height="14" shape-rendering="crispEdges"><rect x="4" y="0" width="1" height="1" fill="#808080"/><rect x="5" y="0" width="1" height="1" fill="#808080"/><rect x="6" y="0" width="1" height="1" fill="#808080"/><rect x="7" y="0" width="1" height="1" fill="#808080"/><rect x="8" y="0" width="1" height="1" fill="#808080"/><rect x="9" y="0" width="1" height="1" fill="#808080"/><rect x="2" y="1" width="1" height="1" fill="#808080"/><rect x="3" y="1" width="1" height="1" fill="#808080"/><rect x="4" y="1" width="1" height="1" fill="#404040"/><rect x="5" y="1" width="1" height="1" fill="#404040"/><rect x="6" y="1" width="1" height="1" fill="#404040"/><rect x="7" y="1" width="1" height="1" fill="#404040"/><rect x="8" y="1" width="1" height="1" fill="#404040"/><rect x="9" y="1" width="1" height="1" fill="#404040"/><rect x="10" y="1" width="1" height="1" fill="#808080"/><rect x="11" y="1" width="1" height="1" fill="#808080"/><rect x="1" y="2" width="1" height="1" fill="#808080"/><rect x="2" y="2" width="1" height="1" fill="#404040"/><rect x="3" y="2" width="1" height="1" fill="#404040"/><rect x="4" y="2" width="1" height="1" fill="#fff"/><rect x="5" y="2" width="1" height="1" fill="#fff"/><rect x="6" y="2" width="1" height="1" fill="#fff"/><rect x="7" y="2" width="1" height="1" fill="#fff"/><rect x="8" y="2" width="1" height="1" fill="#fff"/><rect x="9" y="2" width="1" height="1" fill="#fff"/><rect x="10" y="2" width="1" height="1" fill="#404040"/><rect x="11" y="2" width="1" height="1" fill="#d4d0c8"/><rect x="12" y="2" width="1" height="1" fill="#ffffff"/><rect x="1" y="3" width="1" height="1" fill="#808080"/><rect x="2" y="3" width="1" height="1" fill="#404040"/><rect x="3" y="3" width="1" height="1" fill="#fff"/><rect x="4" y="3" width="1" height="1" fill="#fff"/><rect x="5" y="3" width="1" height="1" fill="#fff"/><rect x="6" y="3" width="1" height="1" fill="#fff"/><rect x="7" y="3" width="1" height="1" fill="#fff"/><rect x="8" y="3" width="1" height="1" fill="#fff"/><rect x="9" y="3" width="1" height="1" fill="#fff"/><rect x="10" y="3" width="1" height="1" fill="#fff"/><rect x="11" y="3" width="1" height="1" fill="#d4d0c8"/><rect x="12" y="3" width="1" height="1" fill="#ffffff"/><rect x="0" y="4" width="1" height="1" fill="#808080"/><rect x="1" y="4" width="1" height="1" fill="#404040"/><rect x="2" y="4" width="1" height="1" fill="#fff"/><rect x="3" y="4" width="1" height="1" fill="#fff"/><rect x="4" y="4" width="1" height="1" fill="#fff"/><rect x="5" y="4" width="1" height="1" fill="#fff"/><rect x="6" y="4" width="1" height="1" fill="#fff"/><rect x="7" y="4" width="1" height="1" fill="#fff"/><rect x="8" y="4" width="1" height="1" fill="#fff"/><rect x="9" y="4" width="1" height="1" fill="#fff"/><rect x="10" y="4" width="1" height="1" fill="#fff"/><rect x="11" y="4" width="1" height="1" fill="#fff"/><rect x="12" y="4" width="1" height="1" fill="#d4d0c8"/><rect x="13" y="4" width="1" height="1" fill="#ffffff"/><rect x="0" y="5" width="1" height="1" fill="#808080"/><rect x="1" y="5" width="1" height="1" fill="#404040"/><rect x="2" y="5" width="1" height="1" fill="#fff"/><rect x="3" y="5" width="1" height="1" fill="#fff"/><rect x="4" y="5" width="1" height="1" fill="#fff"/><rect x="5" y="5" width="1" height="1" fill="#fff"/><rect x="6" y="5" width="1" height="1" fill="#fff"/><rect x="7" y="5" width="1" height="1" fill="#fff"/><rect x="8" y="5" width="1" height="1" fill="#fff"/><rect x="9" y="5" width="1" height="1" fill="#fff"/><rect x="10" y="5" width="1" height="1" fill="#fff"/><rect x="11" y="5" width="1" height="1" fill="#fff"/><rect x="12" y="5" width="1" height="1" fill="#d4d0c8"/><rect x="13" y="5" width="1" height="1" fill="#ffffff"/><rect x="0" y="6" width="1" height="1" fill="#808080"/><rect x="1" y="6" width="1" height="1" fill="#404040"/><rect x="2" y="6" width="1" height="1" fill="#fff"/><rect x="3" y="6" width="1" height="1" fill="#fff"/><rect x="4" y="6" width="1" height="1" fill="#fff"/><rect x="5" y="6" width="1" height="1" fill="#fff"/><rect x="6" y="6" width="1" height="1" fill="#fff"/><rect x="7" y="6" width="1" height="1" fill="#fff"/><rect x="8" y="6" width="1" height="1" fill="#fff"/><rect x="9" y="6" width="1" height="1" fill="#fff"/><rect x="10" y="6" width="1" height="1" fill="#fff"/><rect x="11" y="6" width="1" height="1" fill="#fff"/><rect x="12" y="6" width="1" height="1" fill="#d4d0c8"/><rect x="13" y="6" width="1" height="1" fill="#ffffff"/><rect x="0" y="7" width="1" height="1" fill="#808080"/><rect x="1" y="7" width="1" height="1" fill="#404040"/><rect x="2" y="7" width="1" height="1" fill="#fff"/><rect x="3" y="7" width="1" height="1" fill="#fff"/><rect x="4" y="7" width="1" height="1" fill="#fff"/><rect x="5" y="7" width="1" height="1" fill="#fff"/><rect x="6" y="7" width="1" height="1" fill="#fff"/><rect x="7" y="7" width="1" height="1" fill="#fff"/><rect x="8" y="7" width="1" height="1" fill="#fff"/><rect x="9" y="7" width="1" height="1" fill="#fff"/><rect x="10" y="7" width="1" height="1" fill="#fff"/><rect x="11" y="7" width="1" height="1" fill="#fff"/><rect x="12" y="7" width="1" height="1" fill="#d4d0c8"/><rect x="13" y="7" width="1" height="1" fill="#ffffff"/><rect x="0" y="8" width="1" height="1" fill="#808080"/><rect x="1" y="8" width="1" height="1" fill="#404040"/><rect x="2" y="8" width="1" height="1" fill="#fff"/><rect x="3" y="8" width="1" height="1" fill="#fff"/><rect x="4" y="8" width="1" height="1" fill="#fff"/><rect x="5" y="8" width="1" height="1" fill="#fff"/><rect x="6" y="8" width="1" height="1" fill="#fff"/><rect x="7" y="8" width="1" height="1" fill="#fff"/><rect x="8" y="8" width="1" height="1" fill="#fff"/><rect x="9" y="8" width="1" height="1" fill="#fff"/><rect x="10" y="8" width="1" height="1" fill="#fff"/><rect x="11" y="8" width="1" height="1" fill="#fff"/><rect x="12" y="8" width="1" height="1" fill="#d4d0c8"/><rect x="13" y="8" width="1" height="1" fill="#ffffff"/><rect x="0" y="9" width="1" height="1" fill="#808080"/><rect x="1" y="9" width="1" height="1" fill="#404040"/><rect x="2" y="9" width="1" height="1" fill="#fff"/><rect x="3" y="9" width="1" height="1" fill="#fff"/><rect x="4" y="9" width="1" height="1" fill="#fff"/><rect x="5" y="9" width="1" height="1" fill="#fff"/><rect x="6" y="9" width="1" height="1" fill="#fff"/><rect x="7" y="9" width="1" height="1" fill="#fff"/><rect x="8" y="9" width="1" height="1" fill="#fff"/><rect x="9" y="9" width="1" height="1" fill="#fff"/><rect x="10" y="9" width="1" height="1" fill="#fff"/><rect x="11" y="9" width="1" height="1" fill="#fff"/><rect x="12" y="9" width="1" height="1" fill="#d4d0c8"/><rect x="13" y="9" width="1" height="1" fill="#ffffff"/><rect x="1" y="10" width="1" height="1" fill="#808080"/><rect x="2" y="10" width="1" height="1" fill="#404040"/><rect x="3" y="10" width="1" height="1" fill="#fff"/><rect x="4" y="10" width="1" height="1" fill="#fff"/><rect x="5" y="10" width="1" height="1" fill="#fff"/><rect x="6" y="10" width="1" height="1" fill="#fff"/><rect x="7" y="10" width="1" height="1" fill="#fff"/><rect x="8" y="10" width="1" height="1" fill="#fff"/><rect x="9" y="10" width="1" height="1" fill="#fff"/><rect x="10" y="10" width="1" height="1" fill="#fff"/><rect x="11" y="10" width="1" height="1" fill="#d4d0c8"/><rect x="12" y="10" width="1" height="1" fill="#ffffff"/><rect x="1" y="11" width="1" height="1" fill="#808080"/><rect x="2" y="11" width="1" height="1" fill="#d4d0c8"/><rect x="3" y="11" width="1" height="1" fill="#d4d0c8"/><rect x="4" y="11" width="1" height="1" fill="#fff"/><rect x="5" y="11" width="1" height="1" fill="#fff"/><rect x="6" y="11" width="1" height="1" fill="#fff"/><rect x="7" y="11" width="1" height="1" fill="#fff"/><rect x="8" y="11" width="1" height="1" fill="#fff"/><rect x="9" y="11" width="1" height="1" fill="#fff"/><rect x="10" y="11" width="1" height="1" fill="#d4d0c8"/><rect x="11" y="11" width="1" height="1" fill="#d4d0c8"/><rect x="12" y="11" width="1" height="1" fill="#ffffff"/><rect x="2" y="12" width="1" height="1" fill="#ffffff"/><rect x="3" y="12" width="1" height="1" fill="#ffffff"/><rect x="4" y="12" width="1" height="1" fill="#d4d0c8"/><rect x="5" y="12" width="1" height="1" fill="#d4d0c8"/><rect x="6" y="12" width="1" height="1" fill="#d4d0c8"/><rect x="7" y="12" width="1" height="1" fill="#d4d0c8"/><rect x="8" y="12" width="1" height="1" fill="#d4d0c8"/><rect x="9" y="12" width="1" height="1" fill="#d4d0c8"/><rect x="10" y="12" width="1" height="1" fill="#ffffff"/><rect x="11" y="12" width="1" height="1" fill="#ffffff"/><rect x="4" y="13" width="1" height="1" fill="#ffffff"/><rect x="5" y="13" width="1" height="1" fill="#ffffff"/><rect x="6" y="13" width="1" height="1" fill="#ffffff"/><rect x="7" y="13" width="1" height="1" fill="#ffffff"/><rect x="8" y="13" width="1" height="1" fill="#ffffff"/><rect x="9" y="13" width="1" height="1" fill="#ffffff"/></svg>
<div class="t" style="left:88px;top:453px;font-size:11px;color:#000;">German (Deutsch)</div>
<svg style="left:36px;top:475px" width="16" height="16" viewBox="0 0 16 16" shape-rendering="crispEdges"><rect x="0" y="0" width="16" height="16" fill="#000"/><rect x="1" y="1" width="14" height="14" fill="#ff0000"/><rect x="1" y="4" width="14" height="8" fill="#ffff00"/><rect x="4" y="5" width="3" height="1" fill="#ff0000"/><rect x="4" y="6" width="2" height="4" fill="#ff0000"/><rect x="5" y="9" width="3" height="2" fill="#ff0000"/><rect x="3" y="6" width="1" height="1" fill="#402020"/><rect x="8" y="6" width="1" height="1" fill="#402020"/><rect x="3" y="10" width="1" height="1" fill="#402020"/><rect x="9" y="10" width="1" height="1" fill="#402020"/><rect x="6" y="7" width="2" height="2" fill="#fff"/><rect x="7" y="7" width="1" height="1" fill="#2020a0"/></svg>
<svg style="left:69px;top:477px" width="14" height="14" shape-rendering="crispEdges"><rect x="4" y="0" width="1" height="1" fill="#808080"/><rect x="5" y="0" width="1" height="1" fill="#808080"/><rect x="6" y="0" width="1" height="1" fill="#808080"/><rect x="7" y="0" width="1" height="1" fill="#808080"/><rect x="8" y="0" width="1" height="1" fill="#808080"/><rect x="9" y="0" width="1" height="1" fill="#808080"/><rect x="2" y="1" width="1" height="1" fill="#808080"/><rect x="3" y="1" width="1" height="1" fill="#808080"/><rect x="4" y="1" width="1" height="1" fill="#404040"/><rect x="5" y="1" width="1" height="1" fill="#404040"/><rect x="6" y="1" width="1" height="1" fill="#404040"/><rect x="7" y="1" width="1" height="1" fill="#404040"/><rect x="8" y="1" width="1" height="1" fill="#404040"/><rect x="9" y="1" width="1" height="1" fill="#404040"/><rect x="10" y="1" width="1" height="1" fill="#808080"/><rect x="11" y="1" width="1" height="1" fill="#808080"/><rect x="1" y="2" width="1" height="1" fill="#808080"/><rect x="2" y="2" width="1" height="1" fill="#404040"/><rect x="3" y="2" width="1" height="1" fill="#404040"/><rect x="4" y="2" width="1" height="1" fill="#fff"/><rect x="5" y="2" width="1" height="1" fill="#fff"/><rect x="6" y="2" width="1" height="1" fill="#fff"/><rect x="7" y="2" width="1" height="1" fill="#fff"/><rect x="8" y="2" width="1" height="1" fill="#fff"/><rect x="9" y="2" width="1" height="1" fill="#fff"/><rect x="10" y="2" width="1" height="1" fill="#404040"/><rect x="11" y="2" width="1" height="1" fill="#d4d0c8"/><rect x="12" y="2" width="1" height="1" fill="#ffffff"/><rect x="1" y="3" width="1" height="1" fill="#808080"/><rect x="2" y="3" width="1" height="1" fill="#404040"/><rect x="3" y="3" width="1" height="1" fill="#fff"/><rect x="4" y="3" width="1" height="1" fill="#fff"/><rect x="5" y="3" width="1" height="1" fill="#fff"/><rect x="6" y="3" width="1" height="1" fill="#fff"/><rect x="7" y="3" width="1" height="1" fill="#fff"/><rect x="8" y="3" width="1" height="1" fill="#fff"/><rect x="9" y="3" width="1" height="1" fill="#fff"/><rect x="10" y="3" width="1" height="1" fill="#fff"/><rect x="11" y="3" width="1" height="1" fill="#d4d0c8"/><rect x="12" y="3" width="1" height="1" fill="#ffffff"/><rect x="0" y="4" width="1" height="1" fill="#808080"/><rect x="1" y="4" width="1" height="1" fill="#404040"/><rect x="2" y="4" width="1" height="1" fill="#fff"/><rect x="3" y="4" width="1" height="1" fill="#fff"/><rect x="4" y="4" width="1" height="1" fill="#fff"/><rect x="5" y="4" width="1" height="1" fill="#fff"/><rect x="6" y="4" width="1" height="1" fill="#fff"/><rect x="7" y="4" width="1" height="1" fill="#fff"/><rect x="8" y="4" width="1" height="1" fill="#fff"/><rect x="9" y="4" width="1" height="1" fill="#fff"/><rect x="10" y="4" width="1" height="1" fill="#fff"/><rect x="11" y="4" width="1" height="1" fill="#fff"/><rect x="12" y="4" width="1" height="1" fill="#d4d0c8"/><rect x="13" y="4" width="1" height="1" fill="#ffffff"/><rect x="0" y="5" width="1" height="1" fill="#808080"/><rect x="1" y="5" width="1" height="1" fill="#404040"/><rect x="2" y="5" width="1" height="1" fill="#fff"/><rect x="3" y="5" width="1" height="1" fill="#fff"/><rect x="4" y="5" width="1" height="1" fill="#fff"/><rect x="5" y="5" width="1" height="1" fill="#fff"/><rect x="6" y="5" width="1" height="1" fill="#fff"/><rect x="7" y="5" width="1" height="1" fill="#fff"/><rect x="8" y="5" width="1" height="1" fill="#fff"/><rect x="9" y="5" width="1" height="1" fill="#fff"/><rect x="10" y="5" width="1" height="1" fill="#fff"/><rect x="11" y="5" width="1" height="1" fill="#fff"/><rect x="12" y="5" width="1" height="1" fill="#d4d0c8"/><rect x="13" y="5" width="1" height="1" fill="#ffffff"/><rect x="0" y="6" width="1" height="1" fill="#808080"/><rect x="1" y="6" width="1" height="1" fill="#404040"/><rect x="2" y="6" width="1" height="1" fill="#fff"/><rect x="3" y="6" width="1" height="1" fill="#fff"/><rect x="4" y="6" width="1" height="1" fill="#fff"/><rect x="5" y="6" width="1" height="1" fill="#fff"/><rect x="6" y="6" width="1" height="1" fill="#fff"/><rect x="7" y="6" width="1" height="1" fill="#fff"/><rect x="8" y="6" width="1" height="1" fill="#fff"/><rect x="9" y="6" width="1" height="1" fill="#fff"/><rect x="10" y="6" width="1" height="1" fill="#fff"/><rect x="11" y="6" width="1" height="1" fill="#fff"/><rect x="12" y="6" width="1" height="1" fill="#d4d0c8"/><rect x="13" y="6" width="1" height="1" fill="#ffffff"/><rect x="0" y="7" width="1" height="1" fill="#808080"/><rect x="1" y="7" width="1" height="1" fill="#404040"/><rect x="2" y="7" width="1" height="1" fill="#fff"/><rect x="3" y="7" width="1" height="1" fill="#fff"/><rect x="4" y="7" width="1" height="1" fill="#fff"/><rect x="5" y="7" width="1" height="1" fill="#fff"/><rect x="6" y="7" width="1" height="1" fill="#fff"/><rect x="7" y="7" width="1" height="1" fill="#fff"/><rect x="8" y="7" width="1" height="1" fill="#fff"/><rect x="9" y="7" width="1" height="1" fill="#fff"/><rect x="10" y="7" width="1" height="1" fill="#fff"/><rect x="11" y="7" width="1" height="1" fill="#fff"/><rect x="12" y="7" width="1" height="1" fill="#d4d0c8"/><rect x="13" y="7" width="1" height="1" fill="#ffffff"/><rect x="0" y="8" width="1" height="1" fill="#808080"/><rect x="1" y="8" width="1" height="1" fill="#404040"/><rect x="2" y="8" width="1" height="1" fill="#fff"/><rect x="3" y="8" width="1" height="1" fill="#fff"/><rect x="4" y="8" width="1" height="1" fill="#fff"/><rect x="5" y="8" width="1" height="1" fill="#fff"/><rect x="6" y="8" width="1" height="1" fill="#fff"/><rect x="7" y="8" width="1" height="1" fill="#fff"/><rect x="8" y="8" width="1" height="1" fill="#fff"/><rect x="9" y="8" width="1" height="1" fill="#fff"/><rect x="10" y="8" width="1" height="1" fill="#fff"/><rect x="11" y="8" width="1" height="1" fill="#fff"/><rect x="12" y="8" width="1" height="1" fill="#d4d0c8"/><rect x="13" y="8" width="1" height="1" fill="#ffffff"/><rect x="0" y="9" width="1" height="1" fill="#808080"/><rect x="1" y="9" width="1" height="1" fill="#404040"/><rect x="2" y="9" width="1" height="1" fill="#fff"/><rect x="3" y="9" width="1" height="1" fill="#fff"/><rect x="4" y="9" width="1" height="1" fill="#fff"/><rect x="5" y="9" width="1" height="1" fill="#fff"/><rect x="6" y="9" width="1" height="1" fill="#fff"/><rect x="7" y="9" width="1" height="1" fill="#fff"/><rect x="8" y="9" width="1" height="1" fill="#fff"/><rect x="9" y="9" width="1" height="1" fill="#fff"/><rect x="10" y="9" width="1" height="1" fill="#fff"/><rect x="11" y="9" width="1" height="1" fill="#fff"/><rect x="12" y="9" width="1" height="1" fill="#d4d0c8"/><rect x="13" y="9" width="1" height="1" fill="#ffffff"/><rect x="1" y="10" width="1" height="1" fill="#808080"/><rect x="2" y="10" width="1" height="1" fill="#404040"/><rect x="3" y="10" width="1" height="1" fill="#fff"/><rect x="4" y="10" width="1" height="1" fill="#fff"/><rect x="5" y="10" width="1" height="1" fill="#fff"/><rect x="6" y="10" width="1" height="1" fill="#fff"/><rect x="7" y="10" width="1" height="1" fill="#fff"/><rect x="8" y="10" width="1" height="1" fill="#fff"/><rect x="9" y="10" width="1" height="1" fill="#fff"/><rect x="10" y="10" width="1" height="1" fill="#fff"/><rect x="11" y="10" width="1" height="1" fill="#d4d0c8"/><rect x="12" y="10" width="1" height="1" fill="#ffffff"/><rect x="1" y="11" width="1" height="1" fill="#808080"/><rect x="2" y="11" width="1" height="1" fill="#d4d0c8"/><rect x="3" y="11" width="1" height="1" fill="#d4d0c8"/><rect x="4" y="11" width="1" height="1" fill="#fff"/><rect x="5" y="11" width="1" height="1" fill="#fff"/><rect x="6" y="11" width="1" height="1" fill="#fff"/><rect x="7" y="11" width="1" height="1" fill="#fff"/><rect x="8" y="11" width="1" height="1" fill="#fff"/><rect x="9" y="11" width="1" height="1" fill="#fff"/><rect x="10" y="11" width="1" height="1" fill="#d4d0c8"/><rect x="11" y="11" width="1" height="1" fill="#d4d0c8"/><rect x="12" y="11" width="1" height="1" fill="#ffffff"/><rect x="2" y="12" width="1" height="1" fill="#ffffff"/><rect x="3" y="12" width="1" height="1" fill="#ffffff"/><rect x="4" y="12" width="1" height="1" fill="#d4d0c8"/><rect x="5" y="12" width="1" height="1" fill="#d4d0c8"/><rect x="6" y="12" width="1" height="1" fill="#d4d0c8"/><rect x="7" y="12" width="1" height="1" fill="#d4d0c8"/><rect x="8" y="12" width="1" height="1" fill="#d4d0c8"/><rect x="9" y="12" width="1" height="1" fill="#d4d0c8"/><rect x="10" y="12" width="1" height="1" fill="#ffffff"/><rect x="11" y="12" width="1" height="1" fill="#ffffff"/><rect x="4" y="13" width="1" height="1" fill="#ffffff"/><rect x="5" y="13" width="1" height="1" fill="#ffffff"/><rect x="6" y="13" width="1" height="1" fill="#ffffff"/><rect x="7" y="13" width="1" height="1" fill="#ffffff"/><rect x="8" y="13" width="1" height="1" fill="#ffffff"/><rect x="9" y="13" width="1" height="1" fill="#ffffff"/></svg>
<div class="t" style="left:88px;top:477px;font-size:11px;color:#000;">Spanish (Espana)</div>
<svg style="left:36px;top:499px" width="16" height="16" viewBox="0 0 16 16" shape-rendering="crispEdges"><rect x="0" y="0" width="16" height="16" fill="#000"/><rect x="1" y="1" width="14" height="4.7" fill="#fff"/><rect x="1" y="5.7" width="14" height="4.7" fill="#0000ff"/><rect x="1" y="10.3" width="14" height="4.7" fill="#ff0000"/></svg>
<svg style="left:69px;top:501px" width="14" height="14" shape-rendering="crispEdges"><rect x="4" y="0" width="1" height="1" fill="#808080"/><rect x="5" y="0" width="1" height="1" fill="#808080"/><rect x="6" y="0" width="1" height="1" fill="#808080"/><rect x="7" y="0" width="1" height="1" fill="#808080"/><rect x="8" y="0" width="1" height="1" fill="#808080"/><rect x="9" y="0" width="1" height="1" fill="#808080"/><rect x="2" y="1" width="1" height="1" fill="#808080"/><rect x="3" y="1" width="1" height="1" fill="#808080"/><rect x="4" y="1" width="1" height="1" fill="#404040"/><rect x="5" y="1" width="1" height="1" fill="#404040"/><rect x="6" y="1" width="1" height="1" fill="#404040"/><rect x="7" y="1" width="1" height="1" fill="#404040"/><rect x="8" y="1" width="1" height="1" fill="#404040"/><rect x="9" y="1" width="1" height="1" fill="#404040"/><rect x="10" y="1" width="1" height="1" fill="#808080"/><rect x="11" y="1" width="1" height="1" fill="#808080"/><rect x="1" y="2" width="1" height="1" fill="#808080"/><rect x="2" y="2" width="1" height="1" fill="#404040"/><rect x="3" y="2" width="1" height="1" fill="#404040"/><rect x="4" y="2" width="1" height="1" fill="#fff"/><rect x="5" y="2" width="1" height="1" fill="#fff"/><rect x="6" y="2" width="1" height="1" fill="#fff"/><rect x="7" y="2" width="1" height="1" fill="#fff"/><rect x="8" y="2" width="1" height="1" fill="#fff"/><rect x="9" y="2" width="1" height="1" fill="#fff"/><rect x="10" y="2" width="1" height="1" fill="#404040"/><rect x="11" y="2" width="1" height="1" fill="#d4d0c8"/><rect x="12" y="2" width="1" height="1" fill="#ffffff"/><rect x="1" y="3" width="1" height="1" fill="#808080"/><rect x="2" y="3" width="1" height="1" fill="#404040"/><rect x="3" y="3" width="1" height="1" fill="#fff"/><rect x="4" y="3" width="1" height="1" fill="#fff"/><rect x="5" y="3" width="1" height="1" fill="#fff"/><rect x="6" y="3" width="1" height="1" fill="#fff"/><rect x="7" y="3" width="1" height="1" fill="#fff"/><rect x="8" y="3" width="1" height="1" fill="#fff"/><rect x="9" y="3" width="1" height="1" fill="#fff"/><rect x="10" y="3" width="1" height="1" fill="#fff"/><rect x="11" y="3" width="1" height="1" fill="#d4d0c8"/><rect x="12" y="3" width="1" height="1" fill="#ffffff"/><rect x="0" y="4" width="1" height="1" fill="#808080"/><rect x="1" y="4" width="1" height="1" fill="#404040"/><rect x="2" y="4" width="1" height="1" fill="#fff"/><rect x="3" y="4" width="1" height="1" fill="#fff"/><rect x="4" y="4" width="1" height="1" fill="#fff"/><rect x="5" y="4" width="1" height="1" fill="#fff"/><rect x="6" y="4" width="1" height="1" fill="#fff"/><rect x="7" y="4" width="1" height="1" fill="#fff"/><rect x="8" y="4" width="1" height="1" fill="#fff"/><rect x="9" y="4" width="1" height="1" fill="#fff"/><rect x="10" y="4" width="1" height="1" fill="#fff"/><rect x="11" y="4" width="1" height="1" fill="#fff"/><rect x="12" y="4" width="1" height="1" fill="#d4d0c8"/><rect x="13" y="4" width="1" height="1" fill="#ffffff"/><rect x="0" y="5" width="1" height="1" fill="#808080"/><rect x="1" y="5" width="1" height="1" fill="#404040"/><rect x="2" y="5" width="1" height="1" fill="#fff"/><rect x="3" y="5" width="1" height="1" fill="#fff"/><rect x="4" y="5" width="1" height="1" fill="#fff"/><rect x="5" y="5" width="1" height="1" fill="#fff"/><rect x="6" y="5" width="1" height="1" fill="#fff"/><rect x="7" y="5" width="1" height="1" fill="#fff"/><rect x="8" y="5" width="1" height="1" fill="#fff"/><rect x="9" y="5" width="1" height="1" fill="#fff"/><rect x="10" y="5" width="1" height="1" fill="#fff"/><rect x="11" y="5" width="1" height="1" fill="#fff"/><rect x="12" y="5" width="1" height="1" fill="#d4d0c8"/><rect x="13" y="5" width="1" height="1" fill="#ffffff"/><rect x="0" y="6" width="1" height="1" fill="#808080"/><rect x="1" y="6" width="1" height="1" fill="#404040"/><rect x="2" y="6" width="1" height="1" fill="#fff"/><rect x="3" y="6" width="1" height="1" fill="#fff"/><rect x="4" y="6" width="1" height="1" fill="#fff"/><rect x="5" y="6" width="1" height="1" fill="#fff"/><rect x="6" y="6" width="1" height="1" fill="#fff"/><rect x="7" y="6" width="1" height="1" fill="#fff"/><rect x="8" y="6" width="1" height="1" fill="#fff"/><rect x="9" y="6" width="1" height="1" fill="#fff"/><rect x="10" y="6" width="1" height="1" fill="#fff"/><rect x="11" y="6" width="1" height="1" fill="#fff"/><rect x="12" y="6" width="1" height="1" fill="#d4d0c8"/><rect x="13" y="6" width="1" height="1" fill="#ffffff"/><rect x="0" y="7" width="1" height="1" fill="#808080"/><rect x="1" y="7" width="1" height="1" fill="#404040"/><rect x="2" y="7" width="1" height="1" fill="#fff"/><rect x="3" y="7" width="1" height="1" fill="#fff"/><rect x="4" y="7" width="1" height="1" fill="#fff"/><rect x="5" y="7" width="1" height="1" fill="#fff"/><rect x="6" y="7" width="1" height="1" fill="#fff"/><rect x="7" y="7" width="1" height="1" fill="#fff"/><rect x="8" y="7" width="1" height="1" fill="#fff"/><rect x="9" y="7" width="1" height="1" fill="#fff"/><rect x="10" y="7" width="1" height="1" fill="#fff"/><rect x="11" y="7" width="1" height="1" fill="#fff"/><rect x="12" y="7" width="1" height="1" fill="#d4d0c8"/><rect x="13" y="7" width="1" height="1" fill="#ffffff"/><rect x="0" y="8" width="1" height="1" fill="#808080"/><rect x="1" y="8" width="1" height="1" fill="#404040"/><rect x="2" y="8" width="1" height="1" fill="#fff"/><rect x="3" y="8" width="1" height="1" fill="#fff"/><rect x="4" y="8" width="1" height="1" fill="#fff"/><rect x="5" y="8" width="1" height="1" fill="#fff"/><rect x="6" y="8" width="1" height="1" fill="#fff"/><rect x="7" y="8" width="1" height="1" fill="#fff"/><rect x="8" y="8" width="1" height="1" fill="#fff"/><rect x="9" y="8" width="1" height="1" fill="#fff"/><rect x="10" y="8" width="1" height="1" fill="#fff"/><rect x="11" y="8" width="1" height="1" fill="#fff"/><rect x="12" y="8" width="1" height="1" fill="#d4d0c8"/><rect x="13" y="8" width="1" height="1" fill="#ffffff"/><rect x="0" y="9" width="1" height="1" fill="#808080"/><rect x="1" y="9" width="1" height="1" fill="#404040"/><rect x="2" y="9" width="1" height="1" fill="#fff"/><rect x="3" y="9" width="1" height="1" fill="#fff"/><rect x="4" y="9" width="1" height="1" fill="#fff"/><rect x="5" y="9" width="1" height="1" fill="#fff"/><rect x="6" y="9" width="1" height="1" fill="#fff"/><rect x="7" y="9" width="1" height="1" fill="#fff"/><rect x="8" y="9" width="1" height="1" fill="#fff"/><rect x="9" y="9" width="1" height="1" fill="#fff"/><rect x="10" y="9" width="1" height="1" fill="#fff"/><rect x="11" y="9" width="1" height="1" fill="#fff"/><rect x="12" y="9" width="1" height="1" fill="#d4d0c8"/><rect x="13" y="9" width="1" height="1" fill="#ffffff"/><rect x="1" y="10" width="1" height="1" fill="#808080"/><rect x="2" y="10" width="1" height="1" fill="#404040"/><rect x="3" y="10" width="1" height="1" fill="#fff"/><rect x="4" y="10" width="1" height="1" fill="#fff"/><rect x="5" y="10" width="1" height="1" fill="#fff"/><rect x="6" y="10" width="1" height="1" fill="#fff"/><rect x="7" y="10" width="1" height="1" fill="#fff"/><rect x="8" y="10" width="1" height="1" fill="#fff"/><rect x="9" y="10" width="1" height="1" fill="#fff"/><rect x="10" y="10" width="1" height="1" fill="#fff"/><rect x="11" y="10" width="1" height="1" fill="#d4d0c8"/><rect x="12" y="10" width="1" height="1" fill="#ffffff"/><rect x="1" y="11" width="1" height="1" fill="#808080"/><rect x="2" y="11" width="1" height="1" fill="#d4d0c8"/><rect x="3" y="11" width="1" height="1" fill="#d4d0c8"/><rect x="4" y="11" width="1" height="1" fill="#fff"/><rect x="5" y="11" width="1" height="1" fill="#fff"/><rect x="6" y="11" width="1" height="1" fill="#fff"/><rect x="7" y="11" width="1" height="1" fill="#fff"/><rect x="8" y="11" width="1" height="1" fill="#fff"/><rect x="9" y="11" width="1" height="1" fill="#fff"/><rect x="10" y="11" width="1" height="1" fill="#d4d0c8"/><rect x="11" y="11" width="1" height="1" fill="#d4d0c8"/><rect x="12" y="11" width="1" height="1" fill="#ffffff"/><rect x="2" y="12" width="1" height="1" fill="#ffffff"/><rect x="3" y="12" width="1" height="1" fill="#ffffff"/><rect x="4" y="12" width="1" height="1" fill="#d4d0c8"/><rect x="5" y="12" width="1" height="1" fill="#d4d0c8"/><rect x="6" y="12" width="1" height="1" fill="#d4d0c8"/><rect x="7" y="12" width="1" height="1" fill="#d4d0c8"/><rect x="8" y="12" width="1" height="1" fill="#d4d0c8"/><rect x="9" y="12" width="1" height="1" fill="#d4d0c8"/><rect x="10" y="12" width="1" height="1" fill="#ffffff"/><rect x="11" y="12" width="1" height="1" fill="#ffffff"/><rect x="4" y="13" width="1" height="1" fill="#ffffff"/><rect x="5" y="13" width="1" height="1" fill="#ffffff"/><rect x="6" y="13" width="1" height="1" fill="#ffffff"/><rect x="7" y="13" width="1" height="1" fill="#ffffff"/><rect x="8" y="13" width="1" height="1" fill="#ffffff"/><rect x="9" y="13" width="1" height="1" fill="#ffffff"/></svg>
<div class="t" style="left:88px;top:501px;font-size:11px;color:#000;">Russian (Po-rusky)</div>
<div class="sk" style="left:244px;top:396px;width:16px;height:16px;background:#fff;"></div>
<div class="t" style="left:264px;top:397px;font-size:11px;color:#000;">Full Screen</div>
<div class="sk" style="left:244px;top:420px;width:16px;height:16px;background:#fff;"></div>
<div class="t" style="left:264px;top:421px;font-size:11px;color:#000;">Light graph</div>
<div class="sk" style="left:244px;top:455px;width:32px;height:21px;background:#fff;"></div>
<div class="t" style="left:249px;top:459px;font-size:11px;color:#000;">2</div>
<div class="t" style="left:283px;top:461px;font-size:11px;color:#000;">m/s minim.</div>
<div class="rz" style="left:236px;top:500px;width:128px;height:24px;"></div>
<div class="t" style="left:236px;top:505px;width:128px;font-size:11px;color:#000;text-align:center;">Default Ranges</div>
<div style="left:389px;top:124px;width:367px;height:400px;border:1px solid #fff"></div>
<div style="left:388px;top:123px;width:367px;height:400px;border:1px solid #808080"></div>
<div class="t" style="left:396px;top:117px;padding:0 2px;background:#d4d0c8">Graph Ranges</div>
<div style="left:404px;top:138px;width:16px;height:16px;background:#ffff00;"></div>
<div class="t" style="left:434px;top:139px;font-size:11px;color:#000;">LenL</div>
<div class="sk" style="left:500px;top:133px;width:112px;height:20px;background:#fff;"></div>
<div class="t" style="left:505px;top:137px;font-size:11px;color:#000;">0</div>
<div class="sk" style="left:628px;top:133px;width:112px;height:20px;background:#fff;"></div>
<div class="t" style="left:633px;top:137px;font-size:11px;color:#000;">600</div>
<div style="left:404px;top:158px;width:16px;height:16px;background:#d6d66a;"></div>
<div class="t" style="left:434px;top:159px;font-size:11px;color:#000;">LenR</div>
<div class="sk" style="left:500px;top:153px;width:112px;height:20px;background:#fff;"></div>
<div class="t" style="left:505px;top:157px;font-size:11px;color:#000;">0</div>
<div class="sk" style="left:628px;top:153px;width:112px;height:20px;background:#fff;"></div>
<div class="t" style="left:633px;top:157px;font-size:11px;color:#000;">600</div>
<div style="left:404px;top:178px;width:16px;height:16px;background:#a8a886;"></div>
<div class="t" style="left:434px;top:179px;font-size:11px;color:#000;">WVel</div>
<div class="sk" style="left:500px;top:173px;width:112px;height:20px;background:#fff;"></div>
<div class="t" style="left:505px;top:177px;font-size:11px;color:#000;">0</div>
<div class="sk" style="left:628px;top:173px;width:112px;height:20px;background:#fff;"></div>
<div class="t" style="left:633px;top:177px;font-size:11px;color:#000;">15</div>
<div style="left:404px;top:198px;width:16px;height:16px;background:#ffaa00;"></div>
<div class="t" style="left:434px;top:199px;font-size:11px;color:#000;">TenL</div>
<div class="sk" style="left:500px;top:193px;width:112px;height:20px;background:#fff;"></div>
<div class="t" style="left:505px;top:197px;font-size:11px;color:#000;">0</div>
<div class="sk" style="left:628px;top:193px;width:112px;height:20px;background:#fff;"></div>
<div class="t" style="left:633px;top:197px;font-size:11px;color:#000;">4000</div>
<div style="left:404px;top:218px;width:16px;height:16px;background:#ad7f45;"></div>
<div class="t" style="left:434px;top:219px;font-size:11px;color:#000;">TenR</div>
<div class="sk" style="left:500px;top:213px;width:112px;height:20px;background:#fff;"></div>
<div class="t" style="left:505px;top:217px;font-size:11px;color:#000;">0</div>
<div class="sk" style="left:628px;top:213px;width:112px;height:20px;background:#fff;"></div>
<div class="t" style="left:633px;top:217px;font-size:11px;color:#000;">4000</div>
<div style="left:404px;top:238px;width:16px;height:16px;background:#80ff80;"></div>
<div class="t" style="left:434px;top:239px;font-size:11px;color:#000;">TPos</div>
<div class="sk" style="left:500px;top:233px;width:112px;height:20px;background:#fff;"></div>
<div class="t" style="left:505px;top:237px;font-size:11px;color:#000;">-20</div>
<div class="sk" style="left:628px;top:233px;width:112px;height:20px;background:#fff;"></div>
<div class="t" style="left:633px;top:237px;font-size:11px;color:#000;">400</div>
<div style="left:404px;top:258px;width:16px;height:16px;background:#00aa00;"></div>
<div class="t" style="left:434px;top:259px;font-size:11px;color:#000;">TFee</div>
<div class="sk" style="left:500px;top:253px;width:112px;height:20px;background:#fff;"></div>
<div class="t" style="left:505px;top:257px;font-size:11px;color:#000;">0</div>
<div class="sk" style="left:628px;top:253px;width:112px;height:20px;background:#fff;"></div>
<div class="t" style="left:633px;top:257px;font-size:11px;color:#000;">500</div>
<div style="left:404px;top:278px;width:16px;height:16px;background:#00ffff;"></div>
<div class="t" style="left:434px;top:279px;font-size:11px;color:#000;">FlowL</div>
<div class="sk" style="left:500px;top:273px;width:112px;height:20px;background:#fff;"></div>
<div class="t" style="left:505px;top:277px;font-size:11px;color:#000;">0</div>
<div class="sk" style="left:628px;top:273px;width:112px;height:20px;background:#fff;"></div>
<div class="t" style="left:633px;top:277px;font-size:11px;color:#000;">100</div>
<div style="left:404px;top:298px;width:16px;height:16px;background:#0894d0;"></div>
<div class="t" style="left:434px;top:299px;font-size:11px;color:#000;">FlowR</div>
<div class="sk" style="left:500px;top:293px;width:112px;height:20px;background:#fff;"></div>
<div class="t" style="left:505px;top:297px;font-size:11px;color:#000;">0</div>
<div class="sk" style="left:628px;top:293px;width:112px;height:20px;background:#fff;"></div>
<div class="t" style="left:633px;top:297px;font-size:11px;color:#000;">100</div>
<div style="left:404px;top:318px;width:16px;height:16px;background:#0454aa;"></div>
<div class="t" style="left:434px;top:319px;font-size:11px;color:#000;">FlowM</div>
<div class="sk" style="left:500px;top:313px;width:112px;height:20px;background:#fff;"></div>
<div class="t" style="left:505px;top:317px;font-size:11px;color:#000;">0</div>
<div class="sk" style="left:628px;top:313px;width:112px;height:20px;background:#fff;"></div>
<div class="t" style="left:633px;top:317px;font-size:11px;color:#000;">100</div>
<div style="left:404px;top:338px;width:16px;height:16px;background:#6e7ddb;"></div>
<div class="t" style="left:434px;top:339px;font-size:11px;color:#000;">FlowP</div>
<div class="sk" style="left:500px;top:333px;width:112px;height:20px;background:#fff;"></div>
<div class="t" style="left:505px;top:337px;font-size:11px;color:#000;">0</div>
<div class="sk" style="left:628px;top:333px;width:112px;height:20px;background:#fff;"></div>
<div class="t" style="left:633px;top:337px;font-size:11px;color:#000;">100</div>
<div style="left:404px;top:358px;width:16px;height:16px;background:#a2c4ff;"></div>
<div class="t" style="left:434px;top:359px;font-size:11px;color:#000;">Pump</div>
<div class="sk" style="left:500px;top:353px;width:112px;height:20px;background:#fff;"></div>
<div class="t" style="left:505px;top:357px;font-size:11px;color:#000;">0</div>
<div class="sk" style="left:628px;top:353px;width:112px;height:20px;background:#fff;"></div>
<div class="t" style="left:633px;top:357px;font-size:11px;color:#000;">2000</div>
<div style="left:404px;top:378px;width:16px;height:16px;background:#ff0000;"></div>
<div class="t" style="left:434px;top:379px;font-size:11px;color:#000;">TIn</div>
<div class="sk" style="left:500px;top:373px;width:112px;height:20px;background:#fff;"></div>
<div class="t" style="left:505px;top:377px;font-size:11px;color:#000;">10</div>
<div class="sk" style="left:628px;top:373px;width:112px;height:20px;background:#fff;"></div>
<div class="t" style="left:633px;top:377px;font-size:11px;color:#000;">50</div>
<div style="left:404px;top:398px;width:16px;height:16px;background:#d8626a;"></div>
<div class="t" style="left:434px;top:399px;font-size:11px;color:#000;">TOut</div>
<div class="sk" style="left:500px;top:393px;width:112px;height:20px;background:#fff;"></div>
<div class="t" style="left:505px;top:397px;font-size:11px;color:#000;">10</div>
<div class="sk" style="left:628px;top:393px;width:112px;height:20px;background:#fff;"></div>
<div class="t" style="left:633px;top:397px;font-size:11px;color:#000;">50</div>
<div style="left:404px;top:418px;width:16px;height:16px;background:#d8b6b2;"></div>
<div class="t" style="left:434px;top:419px;font-size:11px;color:#000;">TCool</div>
<div class="sk" style="left:500px;top:413px;width:112px;height:20px;background:#fff;"></div>
<div class="t" style="left:505px;top:417px;font-size:11px;color:#000;">10</div>
<div class="sk" style="left:628px;top:413px;width:112px;height:20px;background:#fff;"></div>
<div class="t" style="left:633px;top:417px;font-size:11px;color:#000;">50</div>
<div style="left:404px;top:438px;width:16px;height:16px;background:#ffaaaa;"></div>
<div class="t" style="left:434px;top:439px;font-size:11px;color:#000;">Test</div>
<div class="sk" style="left:500px;top:433px;width:112px;height:20px;background:#fff;"></div>
<div class="t" style="left:505px;top:437px;font-size:11px;color:#000;">0</div>
<div class="sk" style="left:628px;top:433px;width:112px;height:20px;background:#fff;"></div>
<div class="t" style="left:633px;top:437px;font-size:11px;color:#000;">10</div>
<div style="left:404px;top:458px;width:16px;height:16px;background:#ffffff;"></div>
<div class="t" style="left:434px;top:459px;font-size:11px;color:#000;">Power</div>
<div class="sk" style="left:500px;top:453px;width:112px;height:20px;background:#fff;"></div>
<div class="t" style="left:505px;top:457px;font-size:11px;color:#000;">0</div>
<div class="sk" style="left:628px;top:453px;width:112px;height:20px;background:#fff;"></div>
<div class="t" style="left:633px;top:457px;font-size:11px;color:#000;">50</div>
<div style="left:404px;top:478px;width:16px;height:16px;background:#a4a5a8;"></div>
<div class="t" style="left:434px;top:479px;font-size:11px;color:#000;">MCur</div>
<div class="sk" style="left:500px;top:473px;width:112px;height:20px;background:#fff;"></div>
<div class="t" style="left:505px;top:477px;font-size:11px;color:#000;">0</div>
<div class="sk" style="left:628px;top:473px;width:112px;height:20px;background:#fff;"></div>
<div class="t" style="left:633px;top:477px;font-size:11px;color:#000;">50</div>
<div style="left:404px;top:498px;width:16px;height:16px;background:#606060;"></div>
<div class="t" style="left:434px;top:499px;font-size:11px;color:#000;">TCur</div>
<div class="sk" style="left:500px;top:493px;width:112px;height:20px;background:#fff;"></div>
<div class="t" style="left:505px;top:497px;font-size:11px;color:#000;">0</div>
<div class="sk" style="left:628px;top:493px;width:112px;height:20px;background:#fff;"></div>
<div class="t" style="left:633px;top:497px;font-size:11px;color:#000;">50</div>
<div style="left:4px;top:542px;width:768px;height:22px;box-shadow:inset -1px -1px #fff,inset 1px 1px #808080"></div>
<div class="t" style="left:5px;top:547px;font-size:11px;color:#000;">Sets parameters of the program (F8 key).</div>
<div style="left:758px;top:549px;width:14px;height:15px;background:#d4d0c8;"></div>
<div style="left:4px;top:563px;width:754px;height:1px;background:#fff;"></div>
<div style="left:771px;top:542px;width:1px;height:7px;background:#fff;"></div>
<svg style="left:759px;top:551px" width="13" height="12" shape-rendering="crispEdges"><rect x="11" y="0" width="1" height="1" fill="#fff"/><rect x="12" y="0" width="1" height="1" fill="#808080"/><rect x="10" y="1" width="1" height="1" fill="#fff"/><rect x="11" y="1" width="1" height="1" fill="#808080"/><rect x="12" y="1" width="1" height="1" fill="#808080"/><rect x="9" y="2" width="1" height="1" fill="#fff"/><rect x="10" y="2" width="1" height="1" fill="#808080"/><rect x="11" y="2" width="1" height="1" fill="#808080"/><rect x="8" y="3" width="1" height="1" fill="#fff"/><rect x="9" y="3" width="1" height="1" fill="#808080"/><rect x="10" y="3" width="1" height="1" fill="#808080"/><rect x="12" y="3" width="1" height="1" fill="#fff"/><rect x="7" y="4" width="1" height="1" fill="#fff"/><rect x="8" y="4" width="1" height="1" fill="#808080"/><rect x="9" y="4" width="1" height="1" fill="#808080"/><rect x="11" y="4" width="1" height="1" fill="#fff"/><rect x="12" y="4" width="1" height="1" fill="#808080"/><rect x="6" y="5" width="1" height="1" fill="#fff"/><rect x="7" y="5" width="1" height="1" fill="#808080"/><rect x="8" y="5" width="1" height="1" fill="#808080"/><rect x="10" y="5" width="1" height="1" fill="#fff"/><rect x="11" y="5" width="1" height="1" fill="#808080"/><rect x="12" y="5" width="1" height="1" fill="#808080"/><rect x="5" y="6" width="1" height="1" fill="#fff"/><rect x="6" y="6" width="1" height="1" fill="#808080"/><rect x="7" y="6" width="1" height="1" fill="#808080"/><rect x="9" y="6" width="1" height="1" fill="#fff"/><rect x="10" y="6" width="1" height="1" fill="#808080"/><rect x="11" y="6" width="1" height="1" fill="#808080"/><rect x="4" y="7" width="1" height="1" fill="#fff"/><rect x="5" y="7" width="1" height="1" fill="#808080"/><rect x="6" y="7" width="1" height="1" fill="#808080"/><rect x="8" y="7" width="1" height="1" fill="#fff"/><rect x="9" y="7" width="1" height="1" fill="#808080"/><rect x="10" y="7" width="1" height="1" fill="#808080"/><rect x="12" y="7" width="1" height="1" fill="#fff"/><rect x="3" y="8" width="1" height="1" fill="#fff"/><rect x="4" y="8" width="1" height="1" fill="#808080"/><rect x="5" y="8" width="1" height="1" fill="#808080"/><rect x="7" y="8" width="1" height="1" fill="#fff"/><rect x="8" y="8" width="1" height="1" fill="#808080"/><rect x="9" y="8" width="1" height="1" fill="#808080"/><rect x="11" y="8" width="1" height="1" fill="#fff"/><rect x="12" y="8" width="1" height="1" fill="#808080"/><rect x="2" y="9" width="1" height="1" fill="#fff"/><rect x="3" y="9" width="1" height="1" fill="#808080"/><rect x="4" y="9" width="1" height="1" fill="#808080"/><rect x="6" y="9" width="1" height="1" fill="#fff"/><rect x="7" y="9" width="1" height="1" fill="#808080"/><rect x="8" y="9" width="1" height="1" fill="#808080"/><rect x="10" y="9" width="1" height="1" fill="#fff"/><rect x="11" y="9" width="1" height="1" fill="#808080"/><rect x="12" y="9" width="1" height="1" fill="#808080"/><rect x="1" y="10" width="1" height="1" fill="#fff"/><rect x="2" y="10" width="1" height="1" fill="#808080"/><rect x="3" y="10" width="1" height="1" fill="#808080"/><rect x="5" y="10" width="1" height="1" fill="#fff"/><rect x="6" y="10" width="1" height="1" fill="#808080"/><rect x="7" y="10" width="1" height="1" fill="#808080"/><rect x="9" y="10" width="1" height="1" fill="#fff"/><rect x="10" y="10" width="1" height="1" fill="#808080"/><rect x="11" y="10" width="1" height="1" fill="#808080"/><rect x="0" y="11" width="1" height="1" fill="#fff"/><rect x="1" y="11" width="1" height="1" fill="#808080"/><rect x="2" y="11" width="1" height="1" fill="#808080"/><rect x="4" y="11" width="1" height="1" fill="#fff"/><rect x="5" y="11" width="1" height="1" fill="#808080"/><rect x="6" y="11" width="1" height="1" fill="#808080"/><rect x="8" y="11" width="1" height="1" fill="#fff"/><rect x="9" y="11" width="1" height="1" fill="#808080"/><rect x="10" y="11" width="1" height="1" fill="#808080"/></svg>
</body></html>
